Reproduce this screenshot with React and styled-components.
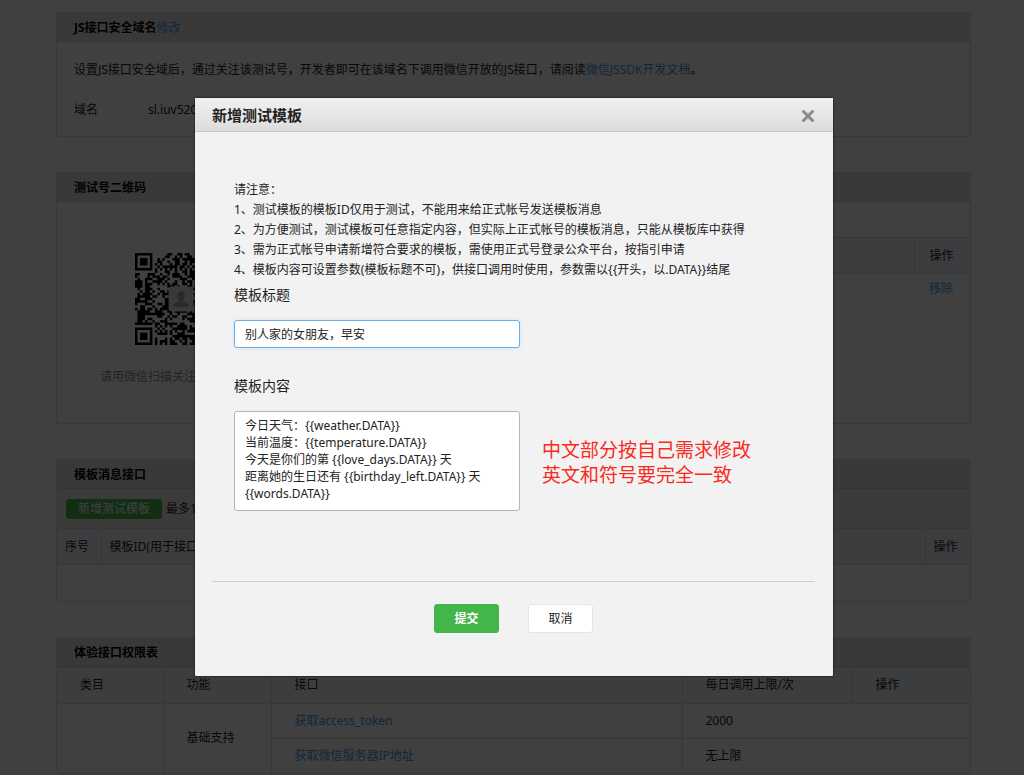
import React from 'react';
import styled, { createGlobalStyle } from 'styled-components';

const Global = createGlobalStyle`
  * { box-sizing: border-box; }
  body {
    margin: 0;
    background: #fff;
    color: #222;
    font: 12px/20px "Noto Sans", "Noto Sans CJK SC", sans-serif;
  }
  button, input, textarea { font: inherit; color: inherit; }
  a { color: #459ae9; text-decoration: none; }
  h2, h3, p { margin: 0; }
`;

const Viewport = styled.div`
  position: relative;
  height: 100vh;
  overflow: hidden;
`;

const Page = styled.main`
  display: flex;
  flex-direction: column;
  gap: 35px;
  padding: 12px 53px 0 56px;
`;

const Panel = styled.section`
  border: 1px solid #dcdde0;
  border-radius: 3px;
  overflow: hidden;
`;

const PanelHead = styled.h2`
  height: 29px;
  padding: 0 17px;
  border-bottom: 1px solid #d2d3d6;
  background: #e4e4e4;
  color: #000;
  font-size: 12px;
  line-height: 29px;
  a { font-weight: 400; }
`;

const DomainBody = styled.div`
  display: flex;
  flex-direction: column;
  gap: 20px;
  height: 94px;
  padding: 18px 17px;
`;

const Field = styled.div`
  display: flex;
  span { width: 74px; }
`;

const QrBody = styled.div`
  display: flex;
  height: 221px;
`;

const QrSide = styled.div`
  display: flex;
  flex-direction: column;
  gap: 22px;
  width: 246px;
  padding: 51px 0 0 43px;
  color: #8d8d8d;
  svg { margin-left: 35px; }
`;

const Fans = styled.div`
  flex: 1;
  padding-top: 35px;
`;

const Table = styled.table`
  width: 100%;
  border-collapse: collapse;
  table-layout: fixed;
  th, td {
    padding: 0 0 0 ${(p) => p.$pad}px;
    text-align: left;
    font-weight: 400;
    border-top: 1px solid #d8dade;
    border-left: ${(p) => (p.$plain ? '0' : '1px solid #d8dade')};
  }
  th {
    height: 36px;
    background: #f0f4f8;
    border-left: 1px solid #d8dade;
  }
  td { height: ${(p) => p.$row}px; }
  th:first-child, tr > td.edge { border-left: 0; }
`;

const Toolbar = styled.div`
  display: flex;
  align-items: center;
  gap: 4px;
  height: 39px;
  padding: 0 9px;
  background: #ececec;
`;

const AddButton = styled.button`
  height: 20px;
  padding: 0 12px;
  border: 0;
  border-radius: 3px;
  background: #44b549;
  color: #fff;
  line-height: 20px;
`;

const Mask = styled.div`
  position: absolute;
  inset: 0;
  display: flex;
  justify-content: center;
  align-items: flex-start;
  padding: 98px 0 0 4px;
  background: rgba(0, 0, 0, 0.75);
`;

const Dialog = styled.div`
  display: flex;
  flex-direction: column;
  width: 638px;
  min-height: 578px;
  background: #f2f2f2;
  border-radius: 1px;
  box-shadow: 0 0 2px #000;
`;

const DialogHead = styled.header`
  display: flex;
  align-items: center;
  justify-content: space-between;
  height: 34px;
  padding: 0 17px;
  border-bottom: 1px solid #c4c4c4;
  background: linear-gradient(#f1f1f1, #dcdcdc);
  h3 { font-size: 15px; line-height: 34px; font-weight: 700; }
`;

const CloseButton = styled.button`
  display: flex;
  padding: 2px 1px 0 0;
  border: 0;
  background: none;
`;

const Form = styled.form`
  display: flex;
  flex-direction: column;
  flex: 1;
`;

const Fields = styled.div`
  display: flex;
  flex-direction: column;
  align-items: flex-start;
  padding: 48px 39px 0;
`;

const Notice = styled.div`
  line-height: 20px;
`;

const Label = styled.label`
  margin: ${(p) => p.$top}px 0 15px;
  font-size: 14px;
  line-height: 20px;
`;

const TitleInput = styled.input`
  width: 286px;
  height: 28px;
  padding: 0 10px;
  border: 1px solid #66afe9;
  border-radius: 3px;
  outline: 0;
  background: #fff;
  box-shadow: 0 0 4px #cfe4f7;
`;

const ContentRow = styled.div`
  display: flex;
  align-items: center;
  gap: 22px;
`;

const ContentInput = styled.textarea`
  display: block;
  width: 286px;
  height: 100px;
  padding: 5px 10px;
  border: 1px solid #b5b5b5;
  border-radius: 3px;
  outline: 0;
  background: #fff;
  line-height: 17px;
  resize: none;
  overflow: hidden;
`;

const Remark = styled.p`
  padding-top: 4px;
  color: #fb2a1e;
  font-size: 19px;
  line-height: 25px;
`;

const Actions = styled.footer`
  display: flex;
  justify-content: center;
  gap: 29px;
  margin: 70px 18px 0 17px;
  padding-top: 22px;
  border-top: 1px solid #cdcdcd;
`;

const Action = styled.button`
  width: 65px;
  height: 29px;
  padding: 0;
  border: 1px solid ${(p) => (p.$primary ? '#44b549' : '#e4e5eb')};
  border-radius: 3px;
  background: ${(p) => (p.$primary ? '#44b549' : '#fff')};
  color: ${(p) => (p.$primary ? '#fff' : '#222')};
  font-weight: ${(p) => (p.$primary ? 700 : 400)};
`;

const SIZE = 37;

const inFinder = (x, y) =>
  (x < 8 && y < 8) || (x >= SIZE - 8 && y < 8) || (x < 8 && y >= SIZE - 8);

function qrPath() {
  let d = '';
  let seed = 77;
  for (let y = 0; y < SIZE; y += 1) {
    for (let x = 0; x < SIZE; x += 1) {
      seed = (seed * 1103515245 + 12345) % 2147483648;
      const timing = x === 6 || y === 6;
      const on = timing ? (x + y) % 2 === 0 : (seed >> 12) % 100 < 52;
      if (on && !inFinder(x, y)) d += `M${x} ${y}h1v1h-1z`;
    }
  }
  return d;
}

function QrCode() {
  return (
    <svg width="92" height="92" viewBox="0 0 37 37" role="img" aria-label="测试号二维码">
      <path d={qrPath()} fill="#000" />
      {[[0, 0], [30, 0], [0, 30]].map(([x, y]) => (
        <g key={`${x}-${y}`}>
          <path d={`M${x} ${y}h7v7h-7zm1 1v5h5v-5z`} fillRule="evenodd" />
          <path d={`M${x + 2} ${y + 2}h3v3h-3z`} />
        </g>
      ))}
      <rect x="13.5" y="13.5" width="10" height="10" rx="1" fill="#e2e2e2" />
      <ellipse cx="18.5" cy="17.3" rx="1.6" ry="2" fill="#a8a8a8" />
      <path d="M15.3 21.6q.2-1.7 2.4-2v-1h1.6v1q2.2.3 2.4 2z" fill="#a8a8a8" />
    </svg>
  );
}

const content = `今日天气：{{weather.DATA}}
当前温度：{{temperature.DATA}}
今天是你们的第 {{love_days.DATA}} 天
距离她的生日还有 {{birthday_left.DATA}} 天
{{words.DATA}}`;

const notes = [
  '请注意：',
  '1、测试模板的模板ID仅用于测试，不能用来给正式帐号发送模板消息',
  '2、为方便测试，测试模板可任意指定内容，但实际上正式帐号的模板消息，只能从模板库中获得',
  '3、需为正式帐号申请新增符合要求的模板，需使用正式号登录公众平台，按指引申请',
  '4、模板内容可设置参数(模板标题不可)，供接口调用时使用，参数需以{{开头，以.DATA}}结尾',
];

function Background() {
  return (
    <Page>
      <Panel>
        <PanelHead>JS接口安全域名<a href="#edit">修改</a></PanelHead>
        <DomainBody>
          <p>
            设置JS接口安全域后，通过关注该测试号，开发者即可在该域名下调用微信开放的JS接口，请阅读
            <a href="#doc">微信JSSDK开发文档</a>。
          </p>
          <Field><span>域名</span>sl.iuv520</Field>
        </DomainBody>
      </Panel>

      <Panel>
        <PanelHead>测试号二维码</PanelHead>
        <QrBody>
          <QrSide>
            <QrCode />
            <p>请用微信扫描关注</p>
          </QrSide>
          <Fans>
            <Table $pad={15} $row={30} $plain>
              <colgroup><col /><col style={{ width: 56 }} /></colgroup>
              <thead><tr><th /><th>操作</th></tr></thead>
              <tbody><tr><td /><td><a href="#remove">移除</a></td></tr></tbody>
            </Table>
          </Fans>
        </QrBody>
      </Panel>

      <Panel>
        <PanelHead>模板消息接口</PanelHead>
        <Toolbar>
          <AddButton type="button">新增测试模板</AddButton>
          <span>最多10个</span>
        </Toolbar>
        <Table $pad={8} $row={36} $plain>
          <colgroup><col style={{ width: 44 }} /><col /><col style={{ width: 45 }} /></colgroup>
          <thead><tr><th>序号</th><th>模板ID(用于接口调用)</th><th>操作</th></tr></thead>
          <tbody><tr><td colSpan={3} /></tr></tbody>
        </Table>
      </Panel>

      <Panel>
        <PanelHead>体验接口权限表</PanelHead>
        <Table $pad={23} $row={35}>
          <colgroup>
            <col style={{ width: 106 }} /><col style={{ width: 108 }} /><col />
            <col style={{ width: 170 }} /><col style={{ width: 118 }} />
          </colgroup>
          <thead>
            <tr><th>类目</th><th>功能</th><th>接口</th><th>每日调用上限/次</th><th>操作</th></tr>
          </thead>
          <tbody>
            <tr>
              <td className="edge" rowSpan={2} />
              <td rowSpan={2}>基础支持</td>
              <td><a href="#token">获取access_token</a></td>
              <td colSpan={2}>2000</td>
            </tr>
            <tr>
              <td><a href="#ip">获取微信服务器IP地址</a></td>
              <td colSpan={2}>无上限</td>
            </tr>
          </tbody>
        </Table>
      </Panel>
    </Page>
  );
}

export default function App() {
  return (
    <Viewport>
      <Global />
      <Background />
      <Mask>
        <Dialog role="dialog" aria-labelledby="dialog-title">
          <DialogHead>
            <h3 id="dialog-title">新增测试模板</h3>
            <CloseButton type="button" aria-label="关闭">
              <svg width="14" height="14" viewBox="0 0 14 14">
                <path d="M2.5 2.5l9 9M11.5 2.5l-9 9" stroke="#8a8a8a" strokeWidth="3" strokeLinecap="round" />
              </svg>
            </CloseButton>
          </DialogHead>
          <Form>
            <Fields>
              <Notice>{notes.map((n) => <p key={n}>{n}</p>)}</Notice>
              <Label htmlFor="tpl-title" $top={5}>模板标题</Label>
              <TitleInput id="tpl-title" defaultValue="别人家的女朋友，早安" />
              <Label htmlFor="tpl-content" $top={28}>模板内容</Label>
              <ContentRow>
                <ContentInput id="tpl-content" defaultValue={content} />
                <Remark>中文部分按自己需求修改<br />英文和符号要完全一致</Remark>
              </ContentRow>
            </Fields>
            <Actions>
              <Action type="button" $primary>提交</Action>
              <Action type="button">取消</Action>
            </Actions>
          </Form>
        </Dialog>
      </Mask>
    </Viewport>
  );
}
